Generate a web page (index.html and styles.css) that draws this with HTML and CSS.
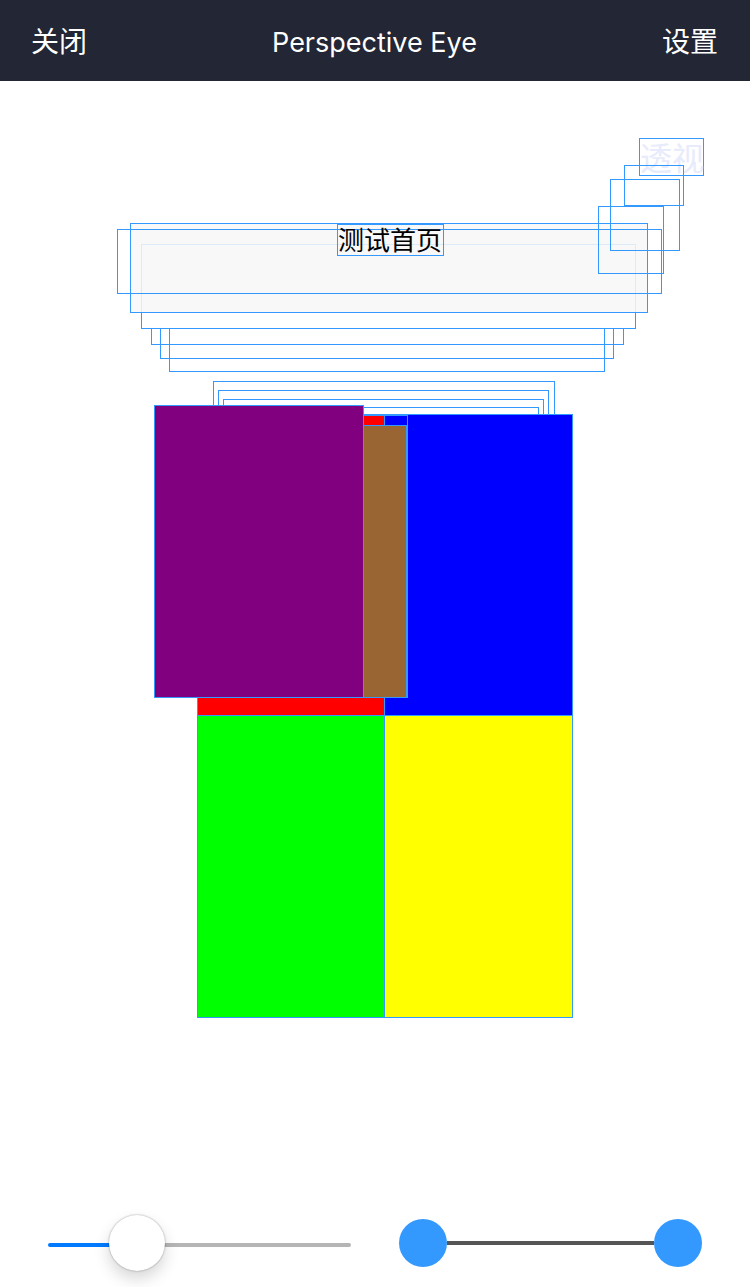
FILE: index.html
```html
<!DOCTYPE html>
<html lang="zh">

<head>
    <meta charset="UTF-8">
    <meta name="viewport" content="width=device-width, initial-scale=1.0">
    <title>Perspective Eye</title>
    <link rel="stylesheet" href="styles.css">
</head>

<body>
    <header class="topbar">
        <span class="topbar-btn">关闭</span>
        <span class="topbar-title">Perspective Eye</span>
        <span class="topbar-btn">设置</span>
    </header>

    <main class="stage">
        <!-- layers are stacked back to front, like the exploded view -->
        <div class="layer layer-f"></div>
        <div class="layer layer-e"></div>
        <div class="layer layer-d"></div>
        <div class="layer layer-c"></div>
        <div class="layer layer-a"></div>
        <div class="layer layer-b"></div>
        <div class="layer layer-g"></div>
        <div class="layer layer-h"></div>
        <div class="layer layer-i"></div>
        <div class="layer layer-j"></div>

        <div class="layer layer-see">透视</div>
        <div class="layer layer-p2"></div>
        <div class="layer layer-p3"></div>
        <div class="layer layer-p4"></div>
        <div class="layer layer-home">测试首页</div>

        <div class="layer quad">
            <div class="cell red"></div>
            <div class="cell blue"></div>
            <div class="cell green"></div>
            <div class="cell yellow"></div>
        </div>

        <div class="layer mini">
            <div class="mini-strip">
                <div class="mini-red"></div>
                <div class="mini-blue"></div>
            </div>
            <div class="mini-brown"></div>
        </div>

        <div class="layer purple"></div>
    </main>

    <footer class="controls">
        <div class="slider">
            <div class="slider-track">
                <div class="slider-fill"></div>
                <div class="slider-rest"></div>
            </div>
            <div class="slider-thumb"></div>
        </div>
        <div class="range">
            <div class="range-dot"></div>
            <div class="range-line"></div>
            <div class="range-dot"></div>
        </div>
    </footer>
</body>

</html>
```

FILE: styles.css
```css
* {
    box-sizing: border-box;
}

body {
    margin: 0;
    width: 750px;
    height: 1287px;
    overflow: hidden;
    background-color: #fff;
    font-family: Inter, "Noto Sans CJK SC", sans-serif;
}

.topbar {
    display: flex;
    align-items: center;
    justify-content: space-between;
    height: 81px;
    padding: 0 32px 0 31px;
    background-color: #232635;
    color: #fff;
    font-size: 28px;
}

.topbar-btn {
    padding-bottom: 2px;
    font-family: "Noto Sans CJK SC", sans-serif;
}

.topbar-title {
    padding-top: 4px;
    font-size: 27px;
}

.stage {
    position: relative;
    height: 1109px;
}

.layer {
    position: absolute;
    border: 1px solid #39f;
}

.layer-f { left: 169px; top: 200px; width: 436px; height: 91px; }
.layer-e { left: 160px; top: 190px; width: 454px; height: 88px; }
.layer-d { left: 151px; top: 182px; width: 473px; height: 82px; }
.layer-c { left: 141px; top: 163px; width: 495px; height: 85px; background-color: #fff; }
.layer-a { left: 130px; top: 142px; width: 518px; height: 90px; background-color: rgba(247, 247, 247, .87); }
.layer-b { left: 117px; top: 148px; width: 545px; height: 65px; }

.layer-g { left: 213px; top: 300px; width: 342px; height: 40px; }
.layer-h { left: 218px; top: 309px; width: 331px; height: 30px; }
.layer-i { left: 223px; top: 318px; width: 321px; height: 20px; }
.layer-j { left: 228px; top: 326px; width: 311px; height: 15px; }

.layer-see {
    left: 639px;
    top: 57px;
    width: 65px;
    height: 38px;
    color: #e8ebfb;
    font-family: "Noto Sans CJK SC", sans-serif;
    font-size: 32px;
    line-height: 34px;
    white-space: nowrap;
}

.layer-p2 { left: 624px; top: 84px; width: 60px; height: 41px; }
.layer-p3 { left: 610px; top: 98px; width: 70px; height: 72px; }
.layer-p4 { left: 598px; top: 125px; width: 66px; height: 68px; }

.layer-home {
    left: 337px;
    top: 143px;
    width: 107px;
    height: 32px;
    color: #000;
    font-family: "Noto Sans CJK SC", sans-serif;
    font-size: 26px;
    line-height: 28px;
    white-space: nowrap;
}

.quad {
    left: 197px;
    top: 333px;
    display: grid;
    grid-template-columns: 187px 188px;
    grid-template-rows: 301px 302px;
    border-width: 1px 0 0 1px;
}

.cell {
    border-right: 1px solid #39f;
    border-bottom: 1px solid #39f;
}

.red { background-color: #f00; }
.blue { background-color: #00f; }
.green { background-color: #0f0; }
.yellow { background-color: #ff0; }

.mini {
    left: 300px;
    top: 334px;
    display: flex;
    flex-direction: column;
    width: 108px;
    height: 283px;
    border-width: 1px 1px 1px 0;
}

.mini-strip {
    display: flex;
    height: 10px;
    border-bottom: 1px solid #39f;
}

.mini-red {
    flex: 1;
    background-color: #f00;
    border-right: 1px solid #39f;
}

.mini-blue {
    width: 22px;
    background-color: #00f;
}

.mini-brown {
    flex: 1;
    background-color: #963;
    border-right: 1px solid #39f;
}

.purple {
    left: 154px;
    top: 324px;
    width: 210px;
    height: 293px;
    background-color: #800080;
}

.controls {
    display: flex;
    gap: 48px;
    height: 97px;
    padding: 29px 48px 0;
}

.slider {
    position: relative;
    width: 303px;
    height: 48px;
    padding-top: 24px;
}

.slider-track {
    display: flex;
    height: 4px;
    border-radius: 2px;
    overflow: hidden;
}

.slider-fill {
    width: 70px;
    background-color: #007aff;
}

.slider-rest {
    flex: 1;
    background-color: #b5b5b5;
}

.slider-thumb {
    position: absolute;
    left: 61px;
    top: -4px;
    width: 56px;
    height: 56px;
    border-radius: 50%;
    background-color: #fff;
    box-shadow: 0 0 2px rgba(0, 0, 0, .4), 0 8px 16px rgba(0, 0, 0, .16);
}

.range {
    display: flex;
    align-items: center;
    width: 303px;
    height: 48px;
}

.range-dot {
    width: 48px;
    height: 48px;
    border-radius: 50%;
    background-color: #39f;
}

.range-line {
    flex: 1;
    height: 4px;
    background-color: #555;
}
```
